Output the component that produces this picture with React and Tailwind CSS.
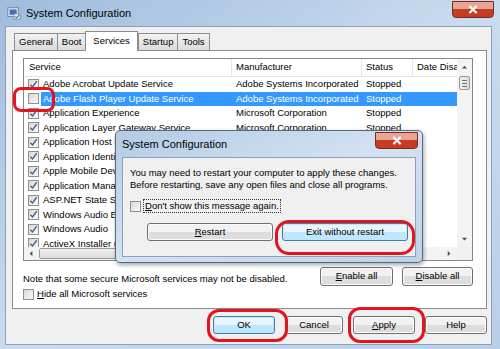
import React from "react";

const rows = [
  { name: "Adobe Acrobat Update Service", mfr: "Adobe Systems Incorporated", status: "Stopped", on: true },
  { name: "Adobe Flash Player Update Service", mfr: "Adobe Systems Incorporated", status: "Stopped", on: false, sel: true },
  { name: "Application Experience", mfr: "Microsoft Corporation", status: "Stopped", on: true },
  { name: "Application Layer Gateway Service", mfr: "Microsoft Corporation", status: "Stopped", on: true },
  { name: "Application Host Helper Service", mfr: "Microsoft Corporation", status: "Running", on: true },
  { name: "Application Identity", mfr: "Microsoft Corporation", status: "Stopped", on: true },
  { name: "Apple Mobile Device", mfr: "Apple Inc.", status: "Running", on: true },
  { name: "Application Management", mfr: "Microsoft Corporation", status: "Stopped", on: true },
  { name: "ASP.NET State Service", mfr: "Microsoft Corporation", status: "Stopped", on: true },
  { name: "Windows Audio Endpoint Builder", mfr: "Microsoft Corporation", status: "Running", on: true },
  { name: "Windows Audio", mfr: "Microsoft Corporation", status: "Running", on: true },
  { name: "ActiveX Installer (AxInstSV)", mfr: "Microsoft Corporation", status: "Stopped", on: true },
];

function Check({ on }) {
  return (
    <span className="inline-flex h-[11px] w-[11px] shrink-0 items-center justify-center border border-[#8e8f8f] bg-gradient-to-br from-[#d8d8d8] to-[#fafafa]">
      {on && (
        <svg viewBox="0 0 10 10" className="h-[9px] w-[9px]">
          <path d="M1.5 5.2 L3.9 7.8 L8.6 1.4" stroke="#4b5f8c" strokeWidth="1.5" fill="none" />
        </svg>
      )}
    </span>
  );
}

function Btn({ children, className = "", primary }) {
  return (
    <div
      className={
        "flex items-center justify-center rounded-[3px] border text-[9.5px] text-black " +
        (primary
          ? "border-[#3c7fb1] bg-gradient-to-b from-[#eaf6fd] from-50% to-[#bee6fd] to-50% shadow-[inset_0_0_0_1px_#c7e7f9] "
          : "border-[#707070] bg-gradient-to-b from-[#f2f2f2] from-50% to-[#dddddd] to-50% shadow-[inset_0_0_0_1px_#fcfcfc] ") +
        className
      }
    >
      {children}
    </div>
  );
}

function CloseBtn({ className = "" }) {
  return (
    <div className={"flex items-center justify-center rounded-b-[4px] border border-[#7a2a20] bg-gradient-to-b from-[#e9a493] from-45% to-[#c43c22] to-45% " + className}>
      <svg viewBox="0 0 12 10" className="h-[9px] w-[12px]">
        <path d="M2 1 L10 9 M10 1 L2 9" stroke="#fff" strokeWidth="2.4" />
        <path d="M2 1 L10 9 M10 1 L2 9" stroke="#f5f5f5" strokeWidth="1.2" />
      </svg>
    </div>
  );
}

function Tab({ label, sel }) {
  return sel ? (
    <div className="relative z-10 -mb-px flex h-[20px] items-center border border-b-0 border-[#898c95] bg-white px-[7px] text-[9.5px]">
      {label}
    </div>
  ) : (
    <div className="-mr-px flex h-[17px] items-center border border-b-0 border-[#898c95] bg-gradient-to-b from-[#f2f2f2] to-[#dcdcdc] px-[4px] text-[9.5px]">
      {label}
    </div>
  );
}

function ScrollArrow({ dir }) {
  const d = {
    up: "M1 5 L4 2 L7 5 Z",
    down: "M1 2 L4 5 L7 2 Z",
    right: "M2 1 L5 4 L2 7 Z",
    left: "M5 1 L2 4 L5 7 Z",
  }[dir];
  return (
    <svg viewBox="0 0 8 8" className="h-[7px] w-[7px]">
      <path d={d} fill="#4d4d4d" />
    </svg>
  );
}

function U({ children }) {
  return <span className="underline underline-offset-[1px]">{children}</span>;
}

export default function App() {
  return (
    <div className="relative h-[349px] w-[500px] overflow-hidden bg-gradient-to-br from-[#9fbcdd] via-[#c9dbef] to-[#b8cfe8] font-['Liberation_Sans',Arial,sans-serif] text-black">
      {/* title bar */}
      <div className="flex h-[26px] items-center pl-[7px] pr-[6px]">
        <svg viewBox="0 0 16 16" className="mr-[5px] h-[14px] w-[14px]">
          <rect x="1" y="2" width="12" height="10" fill="#dfe6ef" stroke="#6b7e99" />
          <rect x="3" y="4" width="8" height="6" fill="#3a6fc4" />
          <rect x="8" y="9" width="7" height="6" fill="#f1f3f6" stroke="#7a8699" />
          <path d="M9.5 12 L11 13.5 L14 10.5" stroke="#2f5fb4" strokeWidth="1.2" fill="none" />
        </svg>
        <span className="text-[11px]">System Configuration</span>
        <CloseBtn className="ml-auto -mt-[7px] h-[17px] w-[42px]" />
      </div>

      {/* client area */}
      <div className="ml-[5px] mr-[8px] flex h-[319px] flex-col border border-[#8ea0b8] bg-[#f0f0f0]">
        {/* tabs */}
        <div className="ml-[8px] mt-[4px] flex items-end">
          <Tab label="General" />
          <Tab label="Boot" />
          <Tab label="Services" sel />
          <Tab label="Startup" />
          <Tab label="Tools" />
        </div>
        {/* panel */}
        <div className="ml-[6px] mr-[4px] flex h-[259px] flex-col border border-[#898c95] bg-white px-[10px] pt-[7px]">
          {/* listview */}
          <div className="mr-[3px] flex h-[203px] flex-col border border-[#828790] bg-white">
            <div className="flex min-h-0 flex-1">
              <div className="min-w-0 flex-1 overflow-hidden">
                <div className="flex h-[18px] items-center border-b border-[#e5e5e5] text-[9.5px]">
                  <div className="flex h-full w-[208px] shrink-0 items-center border-r border-[#e5e5e5] pl-[5px]">Service</div>
                  <div className="flex h-full w-[130px] shrink-0 items-center border-r border-[#e5e5e5] pl-[4px]">Manufacturer</div>
                  <div className="flex h-full w-[51px] shrink-0 items-center border-r border-[#e5e5e5] pl-[4px]">Status</div>
                  <div className="flex h-full w-[60px] shrink-0 items-center overflow-hidden whitespace-nowrap pl-[4px]">Date Disabled</div>
                </div>
                {rows.map((r) => (
                  <div key={r.name} className="flex h-[14.5px] items-center whitespace-nowrap text-[9.5px]">
                    <div className="flex w-[17px] shrink-0 items-center pl-[4px]">
                      <Check on={r.on} />
                    </div>
                    <div className={"flex h-full flex-1 items-center " + (r.sel ? "bg-[#3399ff] text-white" : "")}>
                      <div className="w-[191px] shrink-0 overflow-hidden pl-[2px]">{r.name}</div>
                      <div className="w-[130px] shrink-0 overflow-hidden pl-[4px]">{r.mfr}</div>
                      <div className="w-[51px] shrink-0 pl-[4px]">{r.status}</div>
                    </div>
                  </div>
                ))}
              </div>
              {/* vertical scrollbar */}
              <div className="flex w-[15px] shrink-0 flex-col items-center bg-[#f3f3f3]">
                <div className="flex h-[17px] w-full items-center justify-center">
                  <ScrollArrow dir="up" />
                </div>
                <div className="flex h-[14px] w-[11px] flex-col items-center justify-center gap-[2px] rounded-[2px] border border-[#9a9a9a] bg-gradient-to-r from-[#f0f0f0] to-[#dcdcdc]">
                  <div className="h-px w-[5px] bg-[#777]" />
                  <div className="h-px w-[5px] bg-[#777]" />
                  <div className="h-px w-[5px] bg-[#777]" />
                </div>
                <div className="flex-1" />
                <div className="flex h-[15px] w-full items-center justify-center">
                  <ScrollArrow dir="down" />
                </div>
              </div>
            </div>
            {/* horizontal scrollbar */}
            <div className="flex h-[13px] shrink-0 bg-[#f3f3f3]">
              <div className="flex w-[15px] items-center justify-center">
                <ScrollArrow dir="left" />
              </div>
              <div className="my-[1px] w-[160px] rounded-[2px] border border-[#9a9a9a] bg-gradient-to-b from-[#f0f0f0] to-[#dcdcdc]" />
              <div className="flex-1" />
              <div className="flex w-[15px] items-center justify-center">
                <ScrollArrow dir="right" />
              </div>
              <div className="w-[15px] bg-[#f0f0f0]" />
            </div>
          </div>
          {/* note + buttons */}
          <div className="mr-[3px] mt-[6px] flex items-start">
            <div className="mt-[5px] text-[9.5px]">Note that some secure Microsoft services may not be disabled.</div>
            <Btn className="ml-auto h-[19px] w-[73px]">
              <span><U>E</U>nable all</span>
            </Btn>
            <Btn className="ml-[9px] h-[19px] w-[71px]">
              <span><U>D</U>isable all</span>
            </Btn>
          </div>
          <div className="mt-[1px] flex items-center gap-[3px] text-[9.5px]">
            <Check />
            <span><U>H</U>ide all Microsoft services</span>
          </div>
        </div>
        {/* bottom buttons */}
        <div className="mr-[4px] mt-[7px] flex justify-end gap-[10px]">
          <Btn primary className="h-[18px] w-[62px]">OK</Btn>
          <Btn className="h-[18px] w-[58px]">Cancel</Btn>
          <Btn className="h-[18px] w-[62px]"><span><U>A</U>pply</span></Btn>
          <Btn className="h-[18px] w-[62px]">Help</Btn>
        </div>
      </div>

      {/* message box */}
      <div className="absolute left-[115px] top-[130px] flex h-[133px] w-[308px] flex-col rounded-[5px] border border-[#55687f] bg-gradient-to-br from-[#b3cbe6] via-[#d3e2f2] to-[#bdd2ea] shadow-[1px_2px_4px_rgba(0,0,0,0.35)]">
        <div className="flex h-[26px] items-center pl-[6px] pr-[4px]">
          <span className="text-[11px]">System Configuration</span>
          <CloseBtn className="ml-auto -mt-[8px] h-[17px] w-[43px]" />
        </div>
        <div className="mx-[6px] mb-[5px] flex flex-1 flex-col border border-[#8ea0b8] bg-[#f0f0f0] px-[7px] text-[9.5px]">
          <div className="mt-[9px] whitespace-nowrap leading-[12px]">You may need to restart your computer to apply these changes.</div>
          <div className="whitespace-nowrap leading-[12px]">Before restarting, save any open files and close all programs.</div>
          <div className="mt-[8px] flex items-center gap-[2px]">
            <Check />
            <span className="border border-dotted border-[#333] px-px leading-[12px]"><U>D</U>on't show this message again.</span>
          </div>
          <div className="mt-[10px] flex gap-[9px] pl-[17px]">
            <Btn className="h-[18px] w-[126px]"><span><U>R</U>estart</span></Btn>
            <Btn primary className="h-[18px] w-[126px]">Exit without restart</Btn>
          </div>
        </div>
      </div>

      {/* red annotation marks */}
      <div className="absolute left-[13px] top-[87px] h-[25px] w-[42px] rounded-[8px] border-[3px] border-[#e3141e]" />
      <div className="absolute left-[275px] top-[220px] h-[35px] w-[140px] rounded-[14px] border-[3px] border-[#e3141e]" />
      <div className="absolute left-[207px] top-[309px] h-[33px] w-[81px] rounded-[12px] border-[3px] border-[#e3141e]" />
      <div className="absolute left-[348px] top-[307px] h-[36px] w-[77px] rounded-[12px] border-[3px] border-[#e3141e]" />
    </div>
  );
}
